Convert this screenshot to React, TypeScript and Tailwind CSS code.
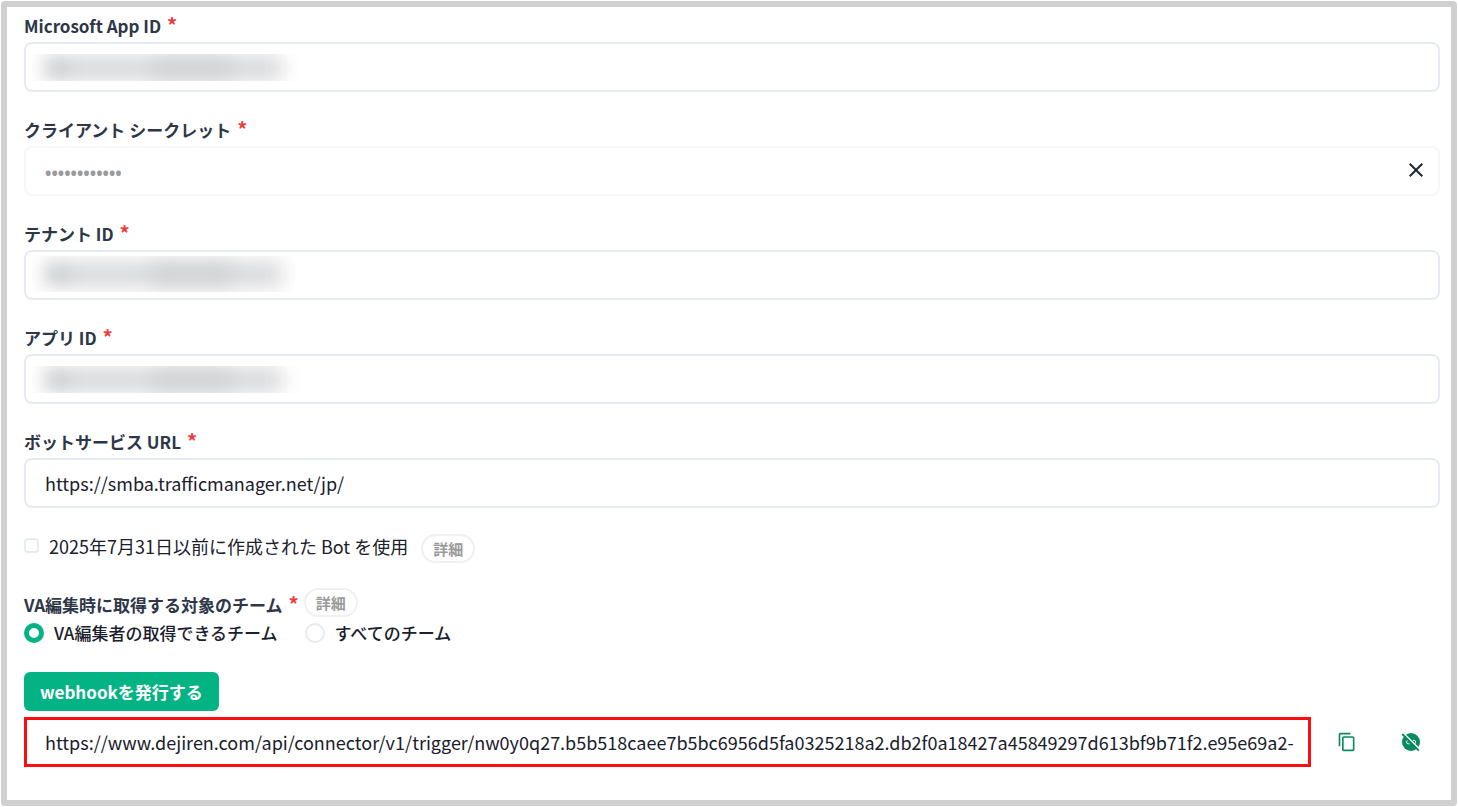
import React, { useState } from 'react';
import { MdClose, MdContentCopy } from 'react-icons/md';

const WEBHOOK_URL =
  'https://www.dejiren.com/api/connector/v1/trigger/nw0y0q27.b5b518caee7b5bc6956d5fa0325218a2.db2f0a18427a45849297d613bf9b71f2.e95e69a2-';

const Required: React.FC = () => <span className="ml-[6px] text-xl leading-none text-[#ee3a3a]">*</span>;

const DetailButton: React.FC = () => (
  <button
    type="button"
    className="h-[29px] rounded-full border-2 border-[#f0f0f0] px-[10px] text-[15px] leading-5 font-bold text-[#9b9b9b]"
  >
    詳細
  </button>
);

/* Filled disc with a chain link, struck through */
const DisableIcon: React.FC = () => (
  <svg width="20" height="20" viewBox="0 0 20 20" fill="none" aria-hidden="true">
    <circle cx="10" cy="10" r="9" fill="currentColor" />
    <path
      d="M8.6 8.4H7.2a1.7 1.7 0 0 0 0 3.4h1.4M12 8.4h1a1.7 1.7 0 0 1 0 3.4h-1"
      stroke="#fff"
      strokeWidth="1"
    />
    <path d="M2.6 1.2 18.8 17.4" stroke="#fff" strokeWidth="1.5" />
    <path d="M1.2 2 17.8 18.6" stroke="currentColor" strokeWidth="1.8" />
  </svg>
);

/* Smudge that hides a confidential value */
const Redaction: React.FC<{ className: string }> = ({ className }) => (
  <span aria-hidden="true" className={`pointer-events-none absolute left-2 overflow-hidden ${className}`}>
    <span className="absolute top-1/2 left-3 h-6 w-[238px] -translate-y-1/2 bg-[#d6d7d9] blur-[10px]" />
    <span className="absolute top-1/2 left-[18px] h-3 w-5 -translate-y-1/2 bg-[#cfd0d2] blur-[7px]" />
    <span className="absolute top-1/2 left-[120px] h-4 w-[80px] -translate-y-1/2 bg-[#cecfd1] blur-[10px]" />
  </span>
);

interface FieldProps {
  id: string;
  label: string;
  children: React.ReactNode;
}

const Field: React.FC<FieldProps> = ({ id, label, children }) => (
  <div>
    <label htmlFor={id} className="block h-7 text-[17px] leading-6 font-bold text-[#2d3748]">
      {label}
      <Required />
    </label>
    <div className="relative">{children}</div>
  </div>
);

const inputClass =
  'block h-[50px] w-full rounded-lg border-2 border-[#e6ebf3] px-[19px] text-[18px] text-[#1a202c] outline-none';

const App: React.FC = () => {
  const [team, setTeam] = useState('editor');
  const [secret, setSecret] = useState('abcdefghijkl');
  const [legacyBot, setLegacyBot] = useState(false);

  const radioClass =
    'size-5 appearance-none rounded-full border-2 border-[#e6ebf3] bg-white checked:border-5 checked:border-[#04b384]';

  return (
    <div className="min-h-screen bg-white p-px font-['Noto_Sans_CJK_JP',sans-serif]">
      <form
        className="min-h-[805px] rounded-sm border-6 border-[#d0d0d0] px-[17px] pt-[7px] pr-[11px]"
        onSubmit={(e) => e.preventDefault()}
      >
        <div className="flex flex-col gap-[26px]">
          <Field id="app-id" label="Microsoft App ID">
            <input id="app-id" type="text" className={inputClass} />
            <Redaction className="top-3 h-[27px] w-[265px]" />
          </Field>

          <Field id="secret" label="クライアント シークレット">
            <input
              id="secret"
              type="password"
              value={secret}
              onChange={(e) => setSecret(e.target.value)}
              className="block h-[50px] w-full rounded-lg border-2 border-[#f6f8fb] px-[19px] pt-1 font-['Noto_Sans',sans-serif] text-[17px] font-bold text-[#9a9ba0] outline-none"
            />
            <button
              type="button"
              aria-label="クリア"
              onClick={() => setSecret('')}
              className="absolute top-3 right-3 text-[#1f2733]"
            >
              <MdClose size={24} />
            </button>
          </Field>

          <Field id="tenant-id" label="テナント ID">
            <input id="tenant-id" type="text" className={inputClass} />
            <Redaction className="top-[6px] h-9 w-[263px]" />
          </Field>

          <Field id="application-id" label="アプリ ID">
            <input id="application-id" type="text" className={inputClass} />
            <Redaction className="top-3 h-[27px] w-[276px]" />
          </Field>

          <Field id="bot-url" label="ボットサービス URL">
            <input
              id="bot-url"
              type="text"
              defaultValue="https://smba.trafficmanager.net/jp/"
              className={inputClass}
            />
          </Field>
        </div>

        <div className="mt-[26px] flex items-start">
          <input
            id="legacy-bot"
            type="checkbox"
            checked={legacyBot}
            onChange={(e) => setLegacyBot(e.target.checked)}
            className="mt-1 size-[15px] appearance-none rounded-sm border-2 border-[#e6ebf3] checked:bg-[#04b384]"
          />
          <label htmlFor="legacy-bot" className="mr-[13px] ml-[10px] text-[18px] leading-6 text-[#1a202c]">
            2025年7月31日以前に作成された Bot を使用
          </label>
          <DetailButton />
        </div>

        <fieldset className="mt-[25px]">
          <legend className="flex items-end text-[17px] leading-6 font-bold text-[#2d3748]">
            <span className="mr-[5px]">
              VA編集時に取得する対象のチーム
              <Required />
            </span>
            <DetailButton />
          </legend>
          <div className="mt-1 flex items-center text-[17px] leading-6 font-medium text-[#1a202c]">
            <input
              id="team-editor"
              type="radio"
              name="team"
              checked={team === 'editor'}
              onChange={() => setTeam('editor')}
              className={radioClass}
            />
            <label htmlFor="team-editor" className="mr-[27px] ml-[10px]">
              VA編集者の取得できるチーム
            </label>
            <input
              id="team-all"
              type="radio"
              name="team"
              checked={team === 'all'}
              onChange={() => setTeam('all')}
              className={radioClass}
            />
            <label htmlFor="team-all" className="ml-[10px]">
              すべてのチーム
            </label>
          </div>
        </fieldset>

        <button
          type="button"
          className="mt-[27px] block h-[39px] rounded-md bg-[#04b384] px-4 text-[17px] leading-6 font-bold text-white"
        >
          webhookを発行する
        </button>

        <div className="mt-[6px] flex items-center text-[#0a8a60]">
          <input
            type="text"
            readOnly
            aria-label="webhook URL"
            value={WEBHOOK_URL}
            className="h-[50px] min-w-0 flex-1 border-3 border-[#fb0d10] pr-2 pl-[18px] text-[18px] text-[#1a202c] outline-none"
          />
          <button type="button" aria-label="コピー" className="ml-[26px]">
            <MdContentCopy size={20} />
          </button>
          <button type="button" aria-label="無効化" className="mr-[19px] ml-11">
            <DisableIcon />
          </button>
        </div>
      </form>
    </div>
  );
};

export default App;
